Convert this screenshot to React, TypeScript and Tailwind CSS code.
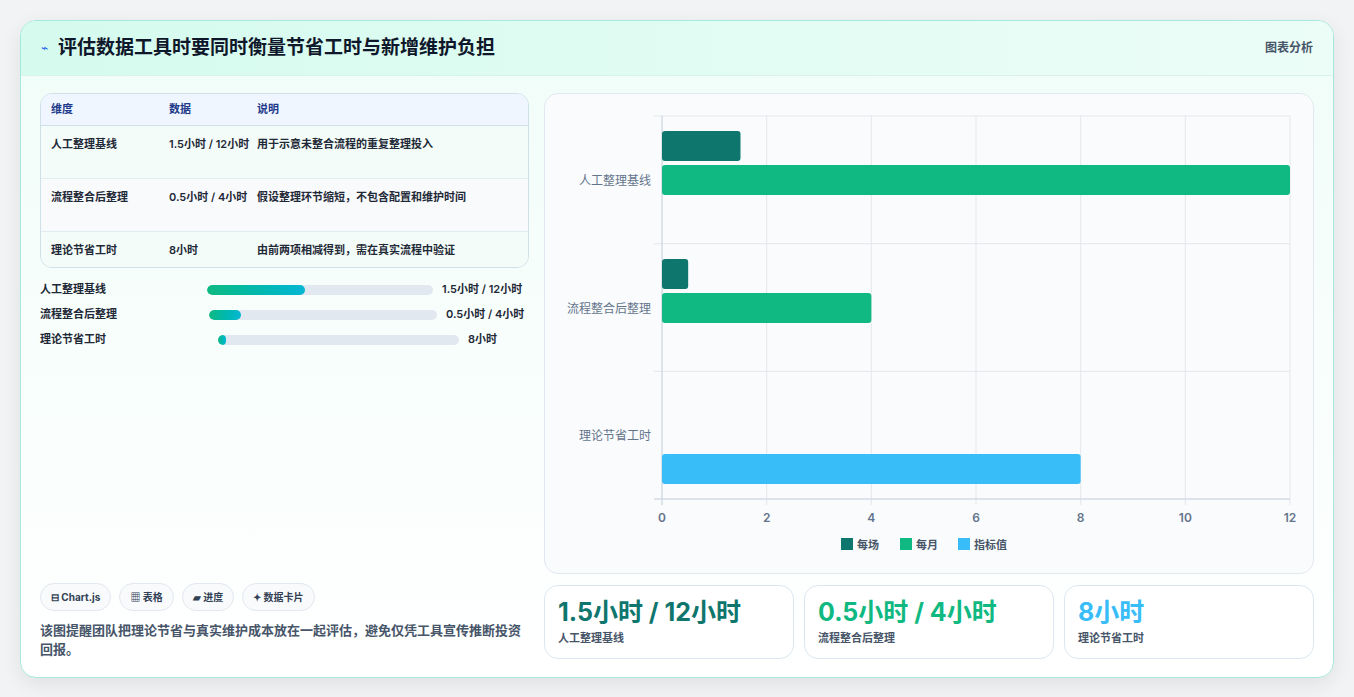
const rows = [
  { name: '人工整理基线', data: '1.5小时 / 12小时', note: '用于示意未整合流程的重复整理投入' },
  { name: '流程整合后整理', data: '0.5小时 / 4小时', note: '假设整理环节缩短，不包含配置和维护时间' },
  { name: '理论节省工时', data: '8小时', note: '由前两项相减得到，需在真实流程中验证' },
];

function Chart() {
  const x0 = 117, x1 = 745, top = 22, bottom = 405;
  const sx = (v: number) => x0 + ((x1 - x0) * v) / 12;
  const ticks = [0, 2, 4, 6, 8, 10, 12];
  const band = (bottom - top) / 3;
  return (
    <svg width="768" height="479" className="block">
      {ticks.map((t) => (
        <line key={t} x1={sx(t)} x2={sx(t)} y1={top} y2={bottom + 6} stroke="#e5e7eb" />
      ))}
      {[0, 1, 2, 3].map((i) => (
        <line key={i} x1={x0 - 8} x2={x1} y1={top + band * i} y2={top + band * i} stroke="#e5e7eb" />
      ))}
      <line x1={x0} x2={x0} y1={top} y2={bottom + 6} stroke="#cbd5e1" />
      <line x1={x0 - 8} x2={x1} y1={bottom} y2={bottom} stroke="#cbd5e1" />
      <rect x={x0} y={37} width={sx(1.5) - x0} height={30} rx={3} fill="#0f766e" />
      <rect x={x0} y={71} width={sx(12) - x0} height={30} rx={3} fill="#10b981" />
      <rect x={x0} y={165} width={sx(0.5) - x0} height={30} rx={3} fill="#0f766e" />
      <rect x={x0} y={199} width={sx(4) - x0} height={30} rx={3} fill="#10b981" />
      <rect x={x0} y={360} width={sx(8) - x0} height={30} rx={3} fill="#38bdf8" />
      {rows.map((r, i) => (
        <text key={r.name} x={x0 - 11} y={top + band * i + band / 2 + 5} textAnchor="end" fontSize="12" fill="#64748b">{r.name}</text>
      ))}
      {ticks.map((t) => (
        <text key={t} x={sx(t)} y={428} textAnchor="middle" fontSize="12" fontWeight="600" fill="#64748b">{t}</text>
      ))}
      {[
        { c: '#0f766e', l: '每场', x: 296 },
        { c: '#10b981', l: '每月', x: 355 },
        { c: '#38bdf8', l: '指标值', x: 413 },
      ].map((g) => (
        <g key={g.l}>
          <rect x={g.x} y={444} width={12} height={12} fill={g.c} />
          <text x={g.x + 16} y={455} fontSize="11" fontWeight="600" fill="#475569">{g.l}</text>
        </g>
      ))}
    </svg>
  );
}

export default function App() {
  const bars = [
    { name: '人工整理基线', val: '1.5小时 / 12小时', bw: 226, fw: 98, ml: 0 },
    { name: '流程整合后整理', val: '0.5小时 / 4小时', bw: 228, fw: 32, ml: 0 },
    { name: '理论节省工时', val: '8小时', bw: 241, fw: 8, ml: 11 },
  ];
  return (
    <div className="min-h-screen bg-[#f1f3f4] pt-[20px] px-[20px] pb-[22px]" style={{ fontFamily: 'Inter, "Noto Sans CJK SC", sans-serif' }}>
      <div className="rounded-[16px] border border-[#a7e8dc] bg-gradient-to-b from-[#f0fdf8] to-white overflow-hidden shadow-[0_6px_20px_rgba(0,0,0,0.08)]">
        <div className="h-[55px] flex items-center justify-between px-[20px] bg-gradient-to-r from-[#d5fbee] to-[#ecfdf7] border-b border-[#d8f3ec]">
          <div className="flex items-center gap-[10px]">
            <span className="text-[#2563eb] text-[12px]">⌁</span>
            <h1 className="text-[19px] font-bold text-[#0f172a]">评估数据工具时要同时衡量节省工时与新增维护负担</h1>
          </div>
          <span className="text-[12px] font-semibold text-[#475569]">图表分析</span>
        </div>
        <div className="flex gap-[15px] px-[19px] pt-[17px] pb-[18px]">
          <div className="w-[492px] flex flex-col">
            <div className="rounded-[12px] border border-[#cfe0e8] overflow-hidden text-[11px]">
              <div className="grid grid-cols-[118px_88px_1fr] h-[32px] items-center px-[10px] bg-[#eff6ff] border-b border-[#cfe0e8] font-semibold text-[#1e3a8a]">
                <span>维度</span><span>数据</span><span>说明</span>
              </div>
              {rows.map((r, i) => (
                <div key={r.name} className={`grid grid-cols-[118px_88px_1fr] px-[10px] ${i < 2 ? 'h-[53px] pt-[9px] border-b border-[#e2ebf0]' : 'h-[35px] items-center'} ${i === 1 ? 'bg-[#f8fafc]' : 'bg-[#f3fcf8]'} font-semibold text-[#1f2937] leading-[18px]`}>
                  <span>{r.name}</span><span className="pr-[4px]">{r.data}</span><span>{r.note}</span>
                </div>
              ))}
            </div>
            <div className="mt-[12px] flex flex-col gap-[6px] text-[11px] font-semibold text-[#1f2937]">
              {bars.map((b) => (
                <div key={b.name} className="flex items-center h-[19px]">
                  <span className="w-[167px]">{b.name}</span>
                  <div className="h-[10px] rounded-full bg-[#e2e8f0] overflow-hidden" style={{ width: b.bw, marginLeft: b.ml + (b.name === '流程整合后整理' ? 2 : 0) }}>
                    <div className="h-full rounded-full bg-gradient-to-r from-[#10b981] to-[#06b6d4]" style={{ width: b.fw }} />
                  </div>
                  <span className="ml-[9px]">{b.val}</span>
                </div>
              ))}
            </div>
            <div className="mt-auto flex gap-[8px] text-[10px] font-bold text-[#334155]">
              <span className="px-[10px] h-[28px] flex items-center rounded-full border border-[#e2e8f0] bg-[#f8fafc]">⊟ Chart.js</span>
              <span className="px-[10px] h-[28px] flex items-center rounded-full border border-[#e2e8f0] bg-[#f8fafc]">▦ 表格</span>
              <span className="px-[10px] h-[28px] flex items-center rounded-full border border-[#e2e8f0] bg-[#f8fafc]">▰ 进度</span>
              <span className="px-[10px] h-[28px] flex items-center rounded-full border border-[#e2e8f0] bg-[#f8fafc]">✦ 数据卡片</span>
            </div>
            <p className="mt-[10px] text-[13px] leading-[19px] font-semibold text-[#475569]">该图提醒团队把理论节省与真实维护成本放在一起评估，避免仅凭工具宣传推断投资回报。</p>
          </div>
          <div className="flex-1 flex flex-col gap-[11px]">
            <div className="rounded-[14px] border border-[#e2e8f0] bg-[#f9fbfd] overflow-hidden">
              <Chart />
            </div>
            <div className="grid grid-cols-3 gap-[10px]">
              {[
                { v: '1.5小时 / 12小时', l: '人工整理基线', c: 'text-[#0f766e]' },
                { v: '0.5小时 / 4小时', l: '流程整合后整理', c: 'text-[#10b981]' },
                { v: '8小时', l: '理论节省工时', c: 'text-[#38bdf8]' },
              ].map((k) => (
                <div key={k.l} className="h-[74px] rounded-[14px] border border-[#dbe7f0] bg-white px-[13px] pt-[9px]">
                  <div className={`text-[25px] font-bold leading-[34px] ${k.c}`}>{k.v}</div>
                  <div className="text-[11px] font-semibold text-[#475569] mt-[1px]">{k.l}</div>
                </div>
              ))}
            </div>
          </div>
        </div>
      </div>
    </div>
  );
}
